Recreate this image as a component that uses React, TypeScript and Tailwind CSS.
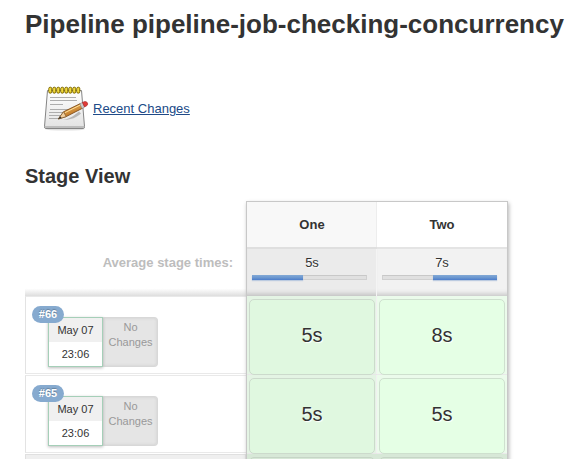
const builds = [
  { id: "#66", date: "May 07", time: "23:06", stages: ["5s", "8s"] },
  { id: "#65", date: "May 07", time: "23:06", stages: ["5s", "5s"] },
];

function NotepadIcon() {
  return (
    <svg width="48" height="48" viewBox="0 0 48 48" fill="none" className="shrink-0">
      <defs>
        <linearGradient id="paper" x1="0" y1="0" x2="0" y2="1">
          <stop offset="0" stopColor="#ffffff" />
          <stop offset="1" stopColor="#e2e2e2" />
        </linearGradient>
        <linearGradient id="wood" x1="0" y1="0" x2="0.5" y2="1">
          <stop offset="0" stopColor="#f5c36b" />
          <stop offset="1" stopColor="#b5691a" />
        </linearGradient>
      </defs>
      <ellipse cx="24" cy="44" rx="20" ry="1.6" fill="#000" opacity="0.12" />
      <path d="M6.5 5.5H40.5L43.5 41.5Q43.6 43.5 42 43.5H5Q3.3 43.5 3.5 41.5Z" fill="url(#paper)" stroke="#858585" />
      <path d="M4 41H43V43H4Z" fill="#bdbdbd" />
      <path d="M9 12.5H35M9 15.5H36M9 19.5H22M9 24.5H32M8 27.5H28M8 30.5H21M8 33.5H20" stroke="#adadad" />
      <path d="M19 34.5C25 35.5 31 32.5 38 26.5L40 28.5C34 33.5 29 35.5 19 34.5Z" fill="#555" opacity="0.35" />
      <path d="M17.3 34L22.5 26.8L39.3 18.6L41.6 23.2L25.2 31.6Z" fill="url(#wood)" stroke="#74400e" strokeWidth="0.8" />
      <path d="M24 27.6L39.6 19.9" stroke="#ffe09a" />
      <path d="M17.3 34L22.5 26.8L25.2 31.6Z" fill="#f1cfa0" stroke="#7d5a2d" strokeWidth="0.7" />
      <path d="M17.3 34L19.1 31.3L20.6 33.1Z" fill="#333" />
      <path d="M38.8 18.7L41.6 17.4L43.6 22L41 23.5Z" fill="#ccc" stroke="#888" strokeWidth="0.6" />
      <path d="M41.4 17.4L44 16.4Q46.5 16.5 46.8 19Q46.7 20.7 43.6 22Z" fill="#df3b37" stroke="#a52222" strokeWidth="0.6" />
      {[7.8, 11.8, 15.8, 19.8, 23.8, 27.8, 31.8, 35.8].map((x) => (
        <g key={x}>
          <rect x={x} y="2.2" width="3" height="6" rx="1.4" fill="#e6c817" stroke="#746000" strokeWidth="0.9" />
          <path d={`M${x + 1.2} 3.3V6.8`} stroke="#fff27c" strokeWidth="0.8" />
        </g>
      ))}
    </svg>
  );
}

function Heading({ name, first }: { name: string; first: boolean }) {
  return (
    <div className={first ? "w-[130px] bg-[#f8f8f8] shadow-[inset_-1px_0_#ededed]" : "w-[130px] bg-white"}>
      <div className="h-[45px] text-center text-[13px] leading-[45px] font-bold">{name}</div>
    </div>
  );
}

function Average({ value, start, width, first }: { value: string; start: number; width: number; first: boolean }) {
  return (
    <div
      className={
        first
          ? "h-[49px] w-[130px] border-t-2 border-t-[#dfdfdf] bg-[#ebebeb] shadow-[inset_-1px_0_#f4f4f4,inset_0_-6px_5px_-4px_#bdbdbd]"
          : "h-[49px] w-[130px] border-t-2 border-t-[#e4e4e4] bg-[#f2f2f2] shadow-[inset_0_-6px_5px_-4px_#c4c4c4]"
      }
    >
      <div className="pt-[4px] text-center text-[13px] leading-[20px] [text-shadow:1px_1px_1px_white]">{value}</div>
      <div className="mt-[2px] ml-[5px] h-[5px] w-[115px] border border-t-[#c8c8c8] border-r-[#d0d0d0] border-b-[#d0d0d0] border-l-[#d0d0d0] bg-[#e0e0e0]">
        <div
          className="-mt-px h-[5px] bg-linear-to-b from-[#83a9d5] via-[#6c98d0] to-[#4d7dca] shadow-[0_1px_1px_#bccbe0]"
          style={{ marginLeft: start - 1, width }}
        />
      </div>
    </div>
  );
}

function BuildInfo({ id, date, time }: { id: string; date: string; time: string }) {
  return (
    <div className="h-[79px] w-[221px]">
      <div className="relative h-[78px] border-y border-l border-y-[#e9e9e9] border-l-[#e3e3e3] bg-white pt-[20px] pl-[22px]">
        <div className="flex h-[50px] text-center">
          <div className="z-10 w-[55px] border border-[#a5cfb8] bg-white text-[11px] shadow-[0_1px_3px_#bbb]">
            <div className="h-[24px] bg-[#f0f0f0] leading-[24px]">{date}</div>
            <div className="h-[24px] leading-[25px]">{time}</div>
          </div>
          <div className="w-[55px] rounded-r-[4px] border border-l-0 border-[#d8d8d8] bg-[#e5e5e5] pt-[2px] pl-px text-[11px] leading-[15px] text-[#999] shadow-[inset_0_0_3px_#ccc]">
            No<br />Changes
          </div>
        </div>
        <div className="absolute top-[9px] left-[6px] z-20 h-[17px] w-[32px] rounded-full bg-[#86aacf] text-center text-[11px] leading-[17px] font-bold text-white [text-shadow:0_-1px_1px_#00000040]">
          {id}
        </div>
      </div>
    </div>
  );
}

function StageCell({ value, first }: { value: string; first: boolean }) {
  return (
    <div
      className={
        first
          ? "h-[79px] w-[130px] border-b border-b-[#e8e8e8] bg-[#e4f4e4] pt-[3px] pl-[2px] shadow-[inset_-1px_0_#f0f0f0]"
          : "h-[79px] w-[130px] border-b border-b-[#eaeaea] bg-[#ebfbeb] pt-[3px] pl-[2px]"
      }
    >
      <div
        className={
          first
            ? "h-[76px] w-[126px] rounded-[5px] border border-[#ccdacc] bg-[#e0f8e0] text-center text-[20px] leading-[70px] [text-shadow:1px_1px_1px_white]"
            : "h-[76px] w-[126px] rounded-[5px] border border-[#cee0ce] bg-[#e5ffe5] text-center text-[20px] leading-[70px] [text-shadow:1px_1px_1px_white]"
        }
      >
        {value}
      </div>
    </div>
  );
}

export default function App() {
  return (
    <main className="h-[459px] w-[576px] overflow-hidden bg-white pl-[25px] font-['Liberation_Sans',Arial,sans-serif] text-[#333]">
      <h1 className="h-[85px] pt-[9px] text-[26px] leading-[30px] font-bold whitespace-nowrap">
        Pipeline pipeline-job-checking-concurrency
      </h1>
      <div className="flex h-[79px] pl-[16px]">
        <NotepadIcon />
        <a href="#" className="mt-[16px] ml-[4px] h-[16px] text-[13px] leading-[16px] text-[#204a87] underline">
          Recent Changes
        </a>
      </div>
      <h2 className="h-[37px] text-[20px] leading-[24px] font-bold">Stage View</h2>
      <section className="flex">
        <div className="w-[221px] pt-[1px]">
          <div className="flex h-[94px] justify-end bg-linear-to-b from-white from-92% to-[#dedede] pt-[53px] pr-[13px] text-[13px] leading-[16px] font-bold text-[#bdbdbd]">
            Average stage times:
          </div>
          {builds.map((build) => (
            <BuildInfo key={build.id} {...build} />
          ))}
          <div className="h-[20px] border border-[#e0e0e0] bg-[#efefef]" />
        </div>
        <div className="z-10 h-[290px] w-[262px] border border-[#c8c8c8] shadow-[1px_2px_4px_#b5b5b5]">
          <div className="flex">
            <Heading name="One" first />
            <Heading name="Two" first={false} />
          </div>
          <div className="flex">
            <Average value="5s" start={0} width={51} first />
            <Average value="7s" start={51} width={64} first={false} />
          </div>
          {builds.map((build) => (
            <div key={build.id} className="flex">
              {build.stages.map((value, index) => (
                <StageCell key={index} value={value} first={index === 0} />
              ))}
            </div>
          ))}
          <div className="flex h-[35px] bg-[#d7e8d7] pt-[3px]">
            <div className="ml-[2px] h-[30px] w-[126px] rounded-[5px] border border-[#c6d5c6]" />
            <div className="ml-[4px] h-[30px] w-[126px] rounded-[5px] border border-[#c6d5c6]" />
          </div>
        </div>
      </section>
    </main>
  );
}
